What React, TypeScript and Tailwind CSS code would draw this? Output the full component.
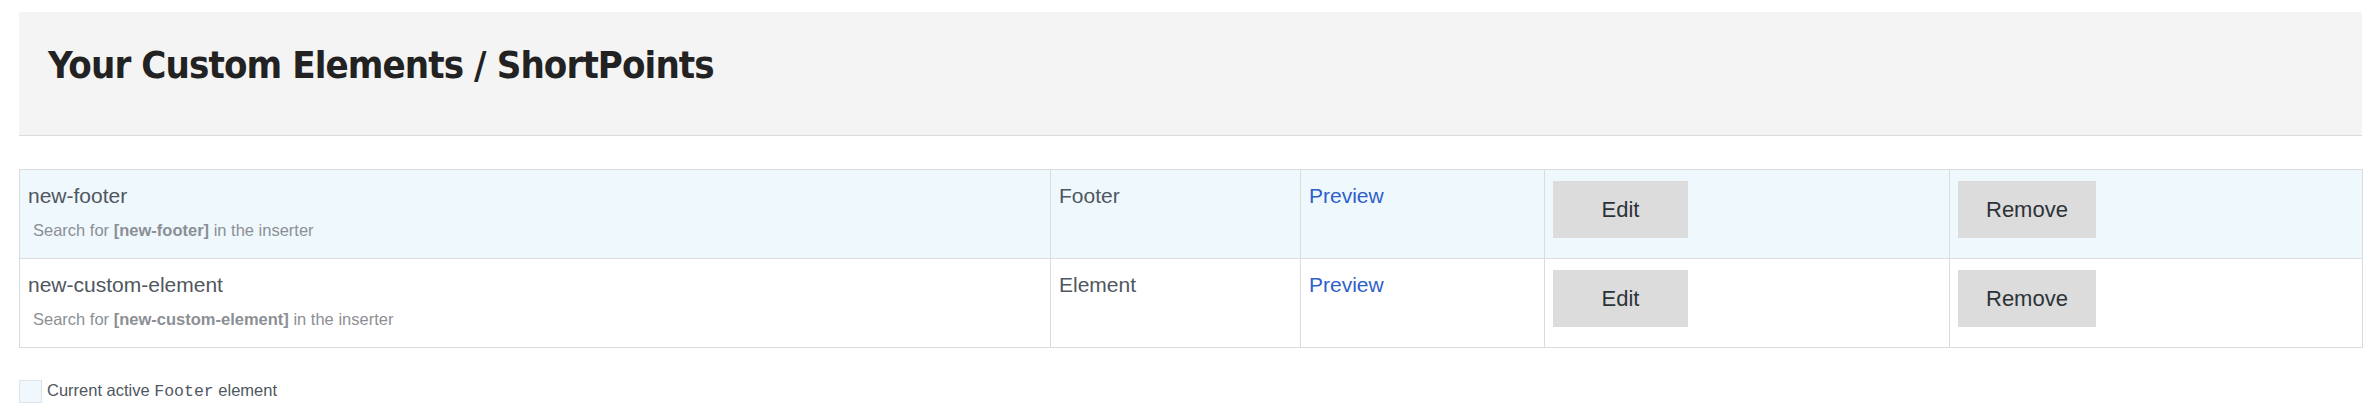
const rows = [
  { slug: "new-footer", type: "Footer", active: true },
  { slug: "new-custom-element", type: "Element", active: false },
];

function Row({ slug, type, active }: { slug: string; type: string; active: boolean }) {
  const cell = "align-top border border-[#dcdcde] px-[8px] pt-[11px]";
  return (
    <tr className={active ? "bg-[#eff8fd]" : "bg-white"}>
      <td className={`${cell} pb-[16px]`}>
        <div className="text-[21px] leading-[30px] text-[#50575e]">{slug}</div>
        <p className="mt-[7px] pl-[5px] text-[16.5px] leading-[24px] text-[#8c8f94]">
          Search for <b className="font-bold">[{slug}]</b> in the inserter
        </p>
      </td>
      <td className={`${cell} text-[21px] leading-[30px] text-[#50575e]`}>{type}</td>
      <td className={`${cell} text-[21px] leading-[30px]`}>
        <a href="#" className="text-[#2f5fc9]">
          Preview
        </a>
      </td>
      <td className={cell}>
        <button className="h-[57px] w-[135px] bg-[#dcdcdc] text-[22px] text-[#2c3338]">Edit</button>
      </td>
      <td className={cell}>
        <button className="h-[57px] bg-[#dcdcdc] px-[28px] text-[22px] text-[#2c3338]">Remove</button>
      </td>
    </tr>
  );
}

export default function App() {
  return (
    <div className="min-h-screen bg-white pl-[19px] pr-[18px] pt-[12px] font-['Liberation_Sans',Arial,sans-serif]">
      <div className="h-[124px] border-b border-[#dcdcdc] bg-[#f4f4f4] pl-[29px] pt-[30px]">
        <h1 className="font-['DejaVu_Sans_Condensed','DejaVu_Sans',sans-serif] text-[38px] font-bold leading-[46px] tracking-[-0.9px] text-[#222] font-stretch-condensed">
          Your Custom Elements / ShortPoints
        </h1>
      </div>

      <table className="mt-[33px] w-full table-fixed border border-[#dcdcde]">
        <colgroup>
          <col className="w-[1031px]" />
          <col className="w-[250px]" />
          <col className="w-[244px]" />
          <col className="w-[405px]" />
          <col className="w-[413px]" />
        </colgroup>
        <tbody>
          {rows.map((r) => (
            <Row key={r.slug} {...r} />
          ))}
        </tbody>
      </table>

      <div className="mt-[30px] flex items-center gap-[5px] text-[16.5px] text-[#50575e]">
        <span className="h-[23px] w-[23px] border border-[#dde3e8] bg-[#f0f8fd]" />
        <span>
          Current active <code className="font-['Liberation_Mono',monospace] text-[16.5px]">Footer</code> element
        </span>
      </div>
    </div>
  );
}
